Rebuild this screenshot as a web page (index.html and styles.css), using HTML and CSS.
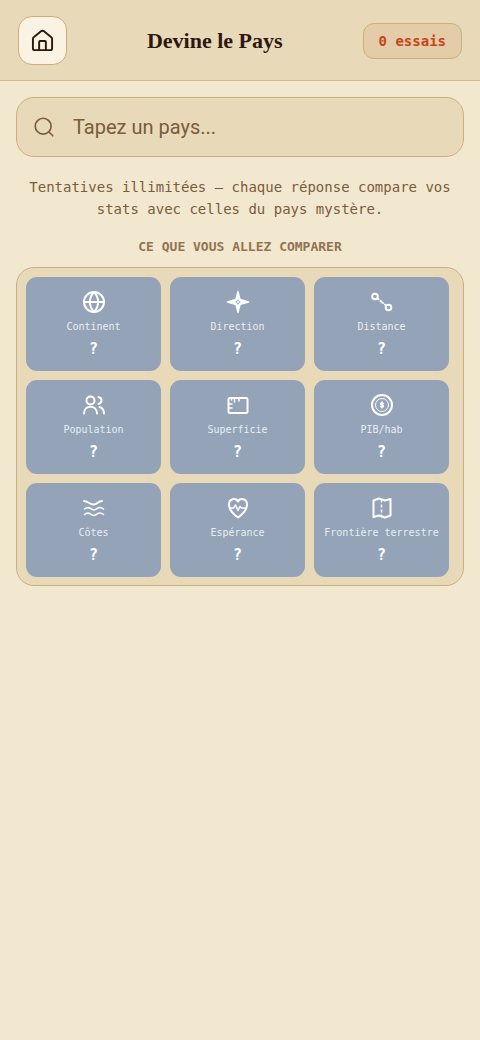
FILE: index.html
```html
<!DOCTYPE html>
<html lang="fr">
<head>
<meta charset="utf-8">
<meta name="viewport" content="width=device-width, initial-scale=1">
<title>Devine le Pays</title>
<link rel="stylesheet" href="styles.css">
</head>
<body>
<header class="topbar">
  <button class="home" type="button" aria-label="Accueil">
    <svg class="home-icon" viewBox="0 0 24 24"><path d="M2 10.200a2 2 0 0 1 .8-1.600l8-6.400a2 2 0 0 1 2.400 0l8 6.400a2 2 0 0 1 .8 1.600V20a2 2 0 0 1-2 2H4a2 2 0 0 1-2-2z"/><path d="M8.500 22v-8.500a1 1 0 0 1 1-1h5a1 1 0 0 1 1 1V22"/></svg>
  </button>
  <h1 class="title">Devine le Pays</h1>
  <span class="tries">0 essais</span>
</header>
<main class="content">
  <label class="search">
    <svg class="search-icon" viewBox="0 0 24 24"><circle cx="11" cy="11" r="9.500"/><path d="M18 18L22.500 22.500"/></svg>
    <input class="search-input" type="text" placeholder="Tapez un pays..." aria-label="Tapez un pays">
  </label>
  <p class="hint">Tentatives illimitées — chaque réponse compare vos stats avec celles du pays mystère.</p>
  <h2 class="heading">CE QUE VOUS ALLEZ COMPARER</h2>
  <section class="panel">
    <div class="card">
      <svg class="icon" viewBox="0 0 24 24"><circle cx="12" cy="12" r="10"/><path d="M2 12h20M12 2c-5.500 6-5.500 14 0 20M12 2c5.500 6 5.500 14 0 20"/></svg>
      <span class="label">Continent</span><span class="value">?</span>
    </div>
    <div class="card">
      <svg class="icon" viewBox="0 0 24 24"><path class="solid" fill-rule="evenodd" d="M12 .5c1 0 1.600 6 2.700 8.300C17 10 23.500 11 23.500 12s-6.500 2-8.800 3.200C13.600 17.500 13 23.500 12 23.500s-1.600-6-2.700-8.300C7 14 .5 13 .5 12s6.500-2 8.800-3.200C10.400 6.500 11 .5 12 .5zM12 9l-1 2-2 1 2 1 1 2 1-2 2-1-2-1z"/><circle class="solid" cx="12" cy="12" r="1"/></svg>
      <span class="label">Direction</span><span class="value">?</span>
    </div>
    <div class="card">
      <svg class="icon" viewBox="0 0 24 24"><circle cx="5" cy="6.500" r="2.800"/><circle cx="18.500" cy="17.500" r="2.800"/><path d="M7.500 8.500l1 .8M10.500 11l2.500 2M15 14.600l1.200 1"/></svg>
      <span class="label">Distance</span><span class="value">?</span>
    </div>
    <div class="card">
      <svg class="icon" viewBox="0 0 24 24"><circle cx="8.500" cy="7.500" r="4"/><path d="M2 20.500c0-9 13-9 13 0M16.500 4c4 1 4 6 0 7M17.500 14c3 1 4.500 3.500 4.500 6.500"/></svg>
      <span class="label">Population</span><span class="value">?</span>
    </div>
    <div class="card">
      <svg class="icon" viewBox="0 0 24 24"><rect x="2.500" y="5" width="19" height="15" rx="1.500"/><path class="wave" d="M8.500 5v4M13 5v3M3 11h3M3 15h3M5.500 5v2"/></svg>
      <span class="label">Superficie</span><span class="value">?</span>
    </div>
    <div class="card">
      <svg class="icon" viewBox="0 0 24 24"><circle cx="12" cy="12" r="10"/><circle class="thin" cx="12" cy="12" r="6.500"/><path class="wave" d="M12 9v6M13.500 10.500c-3-1.300-4 .7-1.500 1.500s1.500 2.800-1.500 1.500"/></svg>
      <span class="label">PIB/hab</span><span class="value">?</span>
    </div>
    <div class="card">
      <svg class="icon" viewBox="0 0 24 24"><path d="M2 5c4 0 5.500 3.500 9.500 3.500S16 5 20 5"/><path class="wave" d="M2.500 13c2.500-2 4-2 6.200-.3s4 1.700 6.200 0 4-1.700 6.600.3M2.500 18.500c2.500-2 4-2 6.200-.3s4 1.700 6.200 0 4-1.700 6.600.3"/></svg>
      <span class="label">Côtes</span><span class="value">?</span>
    </div>
    <div class="card">
      <svg class="icon" viewBox="0 0 24 24"><path d="M12 21.500C7 18 3 13.500 3 8.500c0-6 7-7 9-3 2-4 9-3 9 3 0 5-4 9.500-9 13z"/><path class="wave" d="M4 12h3.500l2-3 2.500 5.500 2-4 1.500 1.500H20"/></svg>
      <span class="label">Espérance</span><span class="value">?</span>
    </div>
    <div class="card">
      <svg class="icon" viewBox="0 0 24 24"><path d="M3.500 4.500L9 2.500l6 2 5.500-1.500V19.500l-5.500 2-6-2-5.500 1.500z"/><path class="dashed" d="M11.500 3.500v18"/></svg>
      <span class="label">Frontière terrestre</span><span class="value">?</span>
    </div>
  </section>
</main>
</body>
</html>
```
FILE: styles.css
```css
* { box-sizing: border-box; }

body {
  margin: 0;
  min-height: 100vh;
  background: #f2e8d0;
  color: #7a5c3a;
  font-family: "DejaVu Sans Mono", "Liberation Mono", monospace;
}

svg {
  display: block;
  fill: none;
  stroke: currentColor;
  stroke-width: 2;
  stroke-linecap: round;
  stroke-linejoin: round;
}

.topbar {
  display: flex;
  align-items: center;
  justify-content: space-between;
  padding: 16px 18px 15px;
  background: #e8d9b8;
  border-bottom: 1px solid #d4b88f;
}

.home {
  display: grid;
  place-items: center;
  width: 49px;
  height: 49px;
  padding: 0;
  border: 1px solid #ccae7e;
  border-radius: 14px;
  background: #faf3e3;
  color: #2c1810;
}

.home-icon { width: 23px; height: 23px; }

.title {
  margin: 0;
  color: #2c1810;
  font: 900 22px/28px "Liberation Serif", serif;
}

.tries {
  padding: 6px 15px;
  border: 1px solid #ccae7e;
  border-radius: 11px;
  background: #e5cca8;
  color: #c4471c;
  font-size: 14px;
  font-weight: 700;
  line-height: 22px;
}

.content { padding: 16px; }

.search {
  display: flex;
  align-items: center;
  gap: 19px;
  height: 60px;
  padding: 0 17px;
  border: 1px solid #ccae7e;
  border-radius: 18px;
  background: #e8d9b8;
}

.search-icon { flex: none; width: 20px; height: 20px; }

.search-input {
  flex: 1;
  min-width: 0;
  padding: 0;
  border: 0;
  outline: 0;
  background: none;
  color: #7a5c3a;
  font: 400 20px/28px Roboto, sans-serif;
}

.search-input::placeholder { color: #7a5c3a; opacity: 1; }

.hint {
  margin: 19px 0 0;
  padding: 0 12px;
  font-size: 14px;
  line-height: 22px;
  text-align: center;
}

.heading {
  margin: 17px 0 10px;
  color: #917352;
  font-size: 13px;
  line-height: 20px;
  text-align: center;
}

.panel {
  display: grid;
  grid-template-columns: repeat(3, minmax(0, 1fr));
  gap: 9px;
  padding: 9px 14px 8px 9px;
  border: 1px solid #ccae7e;
  border-radius: 18px;
  background: #e8d9b8;
}

.card {
  display: flex;
  flex-direction: column;
  align-items: center;
  padding: 13px 0 12px;
  border-radius: 11px;
  background: #94a3b8;
  color: #fff;
}

.icon { width: 24px; height: 24px; }

.label {
  margin-top: 6px;
  color: #e9edf2;
  font-size: 10px;
  line-height: 14px;
}

.value {
  margin-top: 5px;
  font-size: 15px;
  font-weight: 700;
  line-height: 20px;
}

.solid { fill: currentColor; stroke: none; }
.thin { stroke-width: 1; }
.wave { stroke-width: 1.5; }
.dashed { stroke-width: 1.5; stroke-dasharray: 3 2; stroke-linecap: butt; }
```
